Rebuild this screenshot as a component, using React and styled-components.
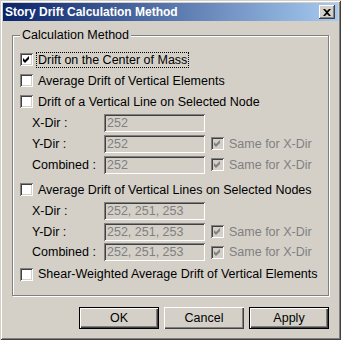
import React from "react";
import styled, { createGlobalStyle } from "styled-components";

const FACE = "#d4d0c8";

const GlobalStyle = createGlobalStyle`
    html, body {
        margin: 0;
        padding: 0;
        background: ${FACE};
    }
    * {
        box-sizing: border-box;
    }
`;

const Window = styled.div`
    width: 341px;
    height: 340px;
    padding: 3px;
    background: ${FACE};
    display: flex;
    flex-direction: column;
    font-family: "Liberation Sans", Arial, sans-serif;
    font-size: 12.5px;
    color: #000;
    box-shadow: inset 1px 1px ${FACE}, inset -1px -1px #404040,
        inset 2px 2px #fff, inset -2px -2px #808080;
`;

const TitleBar = styled.div`
    height: 18px;
    display: flex;
    align-items: center;
    justify-content: space-between;
    padding: 0 3px 0 2px;
    background: linear-gradient(to right, #0a246a, #a6caf0);
`;

const Title = styled.span`
    color: #fff;
    font-family: "Liberation Sans", Arial, sans-serif;
    font-weight: bold;
    font-size: 12px;
`;

const CloseButton = styled.div`
    width: 16px;
    height: 14px;
    display: flex;
    align-items: center;
    justify-content: center;
    background: ${FACE};
    box-shadow: inset -1px -1px #404040, inset 1px 1px #fff,
        inset -2px -2px #808080;
`;

const Body = styled.div`
    flex: 1;
    display: flex;
    flex-direction: column;
    padding: 7px 9px 0 9px;
`;

const Group = styled.fieldset`
    margin: 0;
    padding: 7px 0 9px 0;
    border: 1px solid #808080;
    box-shadow: inset 1px 1px #fff, 1px 1px #fff;
    display: flex;
    flex-direction: column;
`;

const Legend = styled.legend`
    margin-left: 7px;
    padding: 0 2px 0 2px;
    background: ${FACE};
    font-size: 12.5px;
    line-height: 14px;
`;

const Row = styled.div`
    height: ${(p) => p.$h || 21}px;
    display: flex;
    align-items: center;
    padding-top: ${(p) => p.$pt || 0}px;
    padding-left: ${(p) => p.$indent || 7}px;
`;

const Box = styled.span`
    width: 13px;
    height: 13px;
    flex: none;
    background: ${(p) => (p.$disabled ? FACE : "#fff")};
    box-shadow: inset 1px 1px #808080, inset -1px -1px #fff,
        inset 2px 2px #404040, inset -2px -2px ${FACE};
    display: flex;
`;

const Caption = styled.span`
    margin-left: 4px;
    padding: 0 1px;
    color: ${(p) => (p.$disabled ? "#808080" : "#000")};
    outline: ${(p) => (p.$focused ? "1px dotted #000" : "none")};
    line-height: 14px;
    white-space: nowrap;
`;

const Label = styled.span`
    width: 72px;
    flex: none;
    white-space: nowrap;
`;

const Input = styled.div`
    width: 101px;
    height: 18px;
    flex: none;
    display: flex;
    align-items: center;
    padding-left: 3px;
    color: #808080;
    background: ${FACE};
    box-shadow: inset 1px 1px #808080, inset -1px -1px #fff,
        inset 2px 2px #404040, inset -2px -2px ${FACE};
`;

const SameWrap = styled.div`
    display: flex;
    align-items: center;
    margin-left: 6px;
`;

const ButtonBar = styled.div`
    display: flex;
    justify-content: flex-end;
    gap: 5px;
    padding: 11px 0 0 0;
`;

const Button = styled.div`
    width: 80px;
    height: 22px;
    display: flex;
    align-items: center;
    justify-content: center;
    background: ${FACE};
    box-shadow: ${(p) =>
        p.$default
            ? `inset 0 0 0 1px #000, inset 2px 2px #fff, inset -2px -2px #404040, inset -3px -3px #808080`
            : `inset 1px 1px #fff, inset -1px -1px #404040, inset -2px -2px #808080`};
`;

const Check = ({ disabled }) => (
    <svg width="13" height="13" viewBox="0 0 13 13">
        <polygon
            points="3,5 5,7 9,3 9,6 5,10 3,8"
            fill={disabled ? "#808080" : "#000"}
        />
    </svg>
);

const CheckItem = ({ checked, disabled, focused, children }) => (
    <>
        <Box $disabled={disabled}>{checked && <Check disabled={disabled} />}</Box>
        <Caption $disabled={disabled} $focused={focused}>
            {children}
        </Caption>
    </>
);

const FieldRow = ({ label, value, same, h }) => (
    <Row $indent={19} $h={h}>
        <Label>{label}</Label>
        <Input>{value}</Input>
        {same && (
            <SameWrap>
                <CheckItem checked disabled>
                    Same for X-Dir
                </CheckItem>
            </SameWrap>
        )}
    </Row>
);

const App = () => {
    return (
        <>
            <GlobalStyle />
            <Window>
                <TitleBar>
                    <Title>Story Drift Calculation Method</Title>
                    <CloseButton>
                        <svg width="8" height="7" viewBox="0 0 8 7">
                            <path
                                d="M0 0h2l2 2 2-2h2L5 3.5 8 7H6L4 5 2 7H0l3-3.5z"
                                fill="#000"
                            />
                        </svg>
                    </CloseButton>
                </TitleBar>
                <Body>
                    <Group>
                        <Legend>Calculation Method</Legend>
                        <Row>
                            <CheckItem checked focused>
                                Drift on the Center of Mass
                            </CheckItem>
                        </Row>
                        <Row>
                            <CheckItem>Average Drift of Vertical Elements</CheckItem>
                        </Row>
                        <Row>
                            <CheckItem>Drift of a Vertical Line on Selected Node</CheckItem>
                        </Row>
                        <FieldRow label="X-Dir :" value="252" />
                        <FieldRow label="Y-Dir :" value="252" same />
                        <FieldRow label="Combined :" value="252" same />
                        <Row $h={25} $pt={4}>
                            <CheckItem>Average Drift of Vertical Lines on Selected Nodes</CheckItem>
                        </Row>
                        <FieldRow label="X-Dir :" value="252, 251, 253" />
                        <FieldRow label="Y-Dir :" value="252, 251, 253" same />
                        <FieldRow label="Combined :" value="252, 251, 253" same h={20} />
                        <Row $h={24}>
                            <CheckItem>Shear-Weighted Average Drift of Vertical Elements</CheckItem>
                        </Row>
                    </Group>
                    <ButtonBar>
                        <Button $default>OK</Button>
                        <Button>Cancel</Button>
                        <Button $default>Apply</Button>
                    </ButtonBar>
                </Body>
            </Window>
        </>
    );
};

export default App;
